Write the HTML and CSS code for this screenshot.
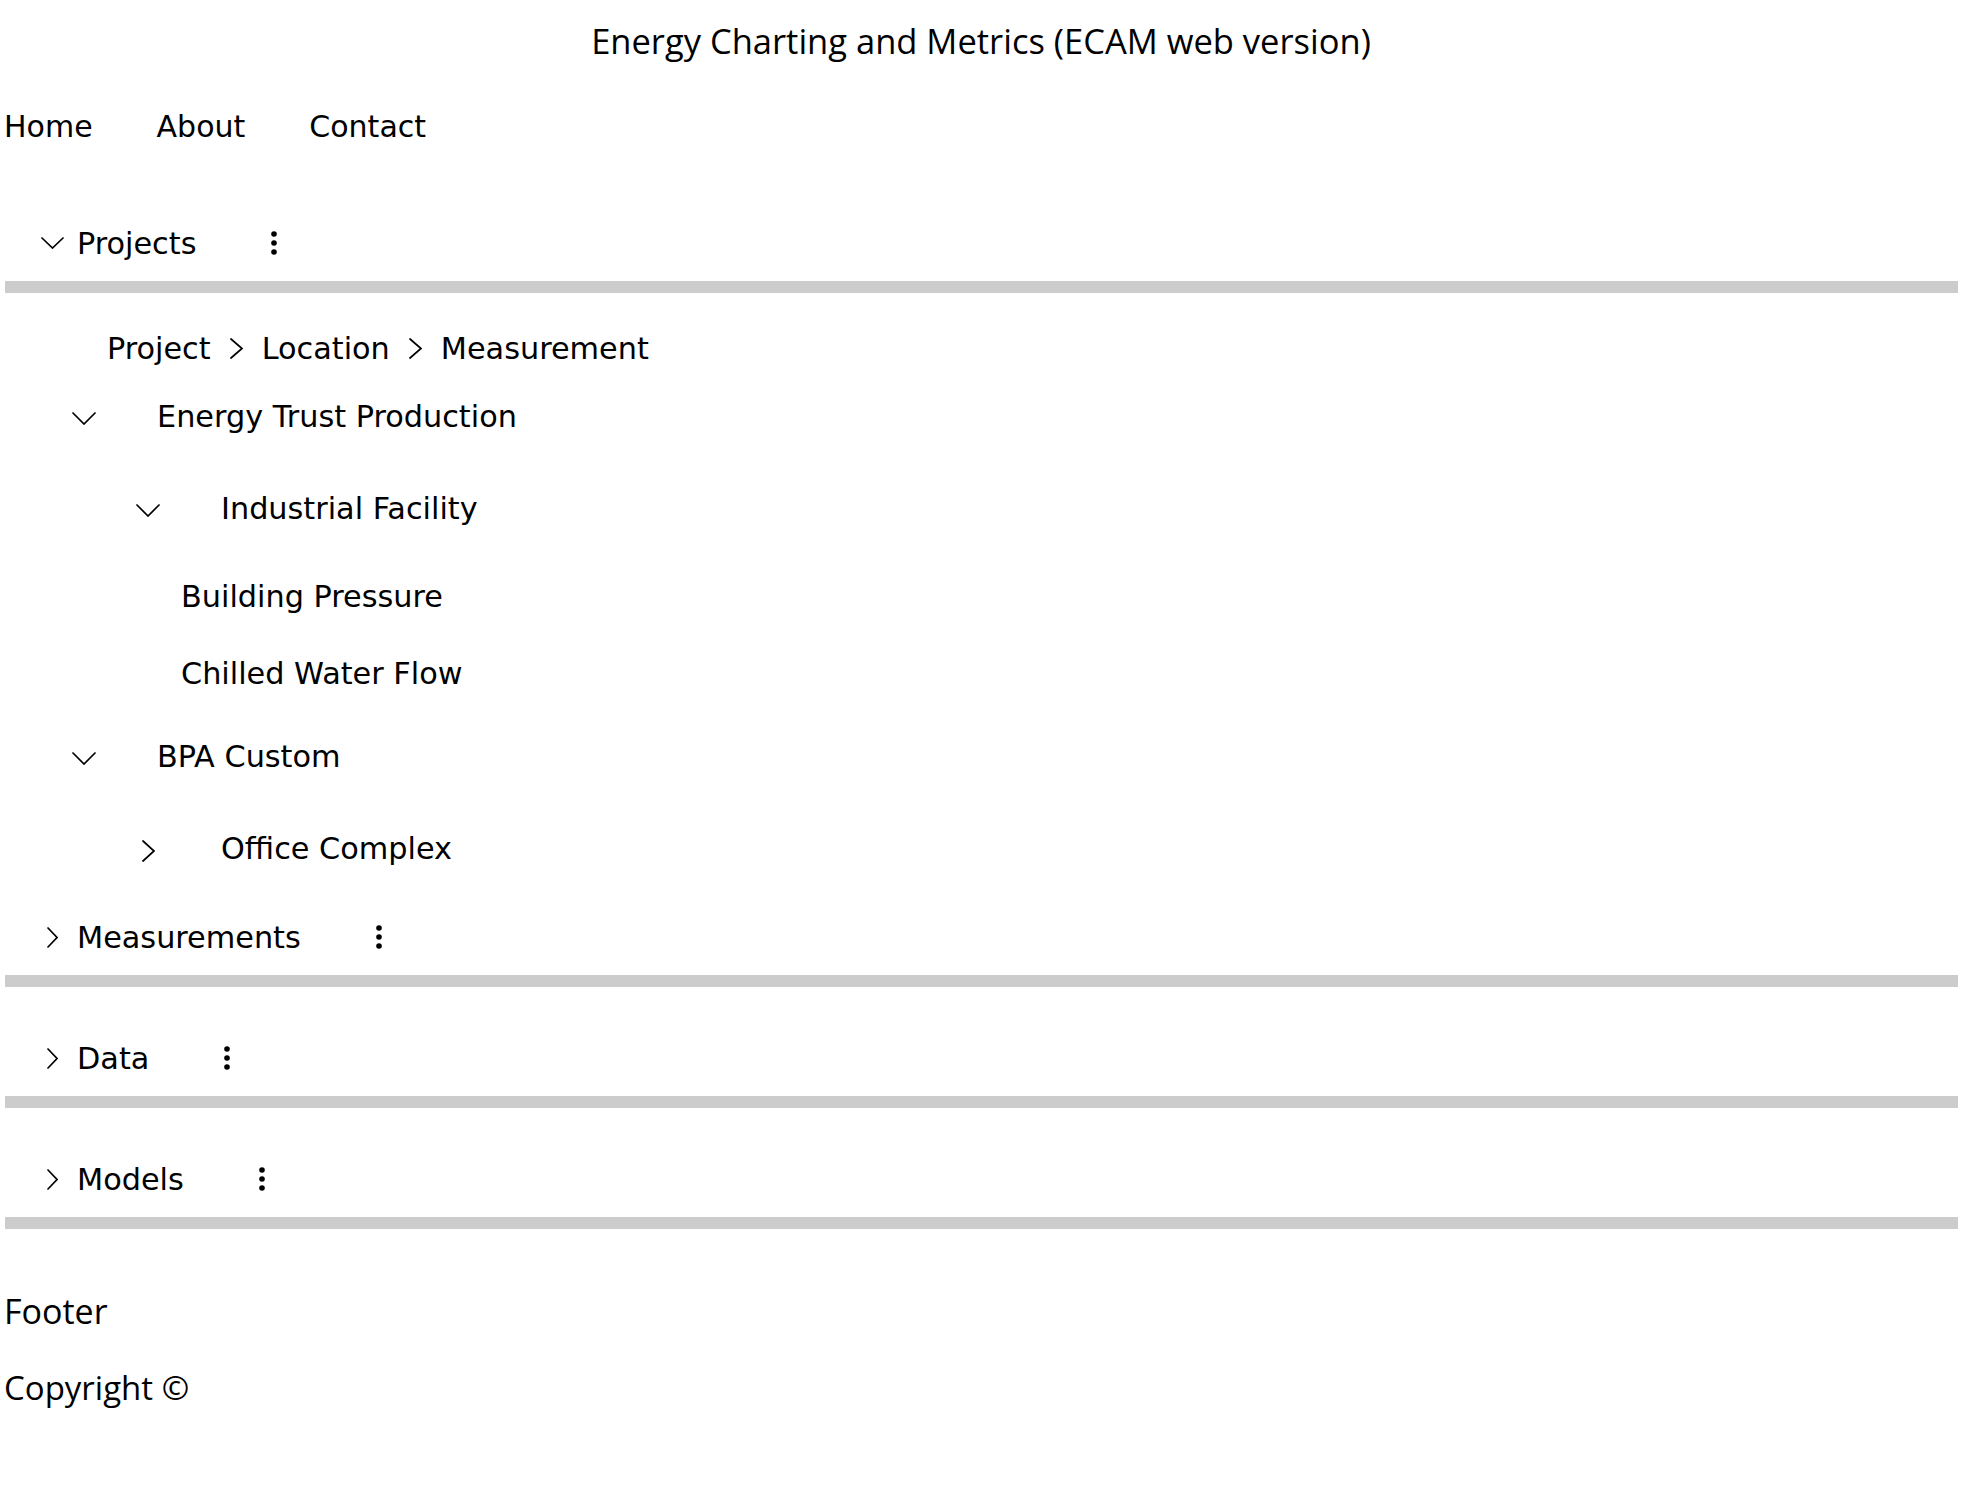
FILE: index.html
```html
<!DOCTYPE html>
<html lang="en">
<head>
<meta charset="utf-8">
<title>ECAM</title>
<link rel="stylesheet" href="styles.css">
</head>
<body>
<div class="page">
  <header class="site-header">
    <h1 class="site-title">Energy Charting and Metrics (ECAM web version)</h1>
  </header>
  <nav class="site-nav">
    <a href="#">Home</a>
    <a href="#">About</a>
    <a href="#">Contact</a>
  </nav>
  <main class="panels">
    <section class="panel">
      <div class="panel-head">
        <span class="chev-box"><svg class="chev-down-sm" viewBox="0 0 23 12" width="23" height="12"><polyline points="1,1 11.5,11 22,1"/></svg></span>
        <span class="panel-title">Projects</span>
        <svg class="kebab" viewBox="0 0 6 24" width="6" height="24"><circle cx="3" cy="3" r="2.8"/><circle cx="3" cy="12" r="2.8"/><circle cx="3" cy="21" r="2.8"/></svg>
      </div>
      <div class="panel-rule"></div>
      <div class="tree">
        <div class="crumbs">
          <span>Project</span>
          <svg class="sep" viewBox="0 0 13 21" width="13" height="21"><polyline points="1,1 12,10.5 1,20"/></svg>
          <span>Location</span>
          <svg class="sep" viewBox="0 0 13 21" width="13" height="21"><polyline points="1,1 12,10.5 1,20"/></svg>
          <span>Measurement</span>
        </div>
        <div class="branch">
          <div class="node level1">
            <span class="node-chev"><svg viewBox="0 0 24 13" width="24" height="13"><polyline points="1,1 12,12 23,1"/></svg></span>
            <span class="label">Energy Trust Production</span>
          </div>
          <div class="branch">
            <div class="node level2">
              <span class="node-chev"><svg viewBox="0 0 24 13" width="24" height="13"><polyline points="1,1 12,12 23,1"/></svg></span>
              <span class="label">Industrial Facility</span>
            </div>
            <div class="leaves">
              <div class="leaf">Building Pressure</div>
              <div class="leaf">Chilled Water Flow</div>
            </div>
          </div>
        </div>
        <div class="branch">
          <div class="node level1">
            <span class="node-chev"><svg viewBox="0 0 24 13" width="24" height="13"><polyline points="1,1 12,12 23,1"/></svg></span>
            <span class="label">BPA Custom</span>
          </div>
          <div class="branch">
            <div class="node level2">
              <span class="node-chev"><svg class="right" viewBox="0 0 13 22" width="13" height="22"><polyline points="1,1 12,11 1,21"/></svg></span>
              <span class="label">Office Complex</span>
            </div>
          </div>
        </div>
      </div>
    </section>
    <section class="panel">
      <div class="panel-head">
        <span class="chev-box"><svg viewBox="0 0 11 21" width="11" height="21"><polyline points="1,1 10,10.5 1,20"/></svg></span>
        <span class="panel-title">Measurements</span>
        <svg class="kebab" viewBox="0 0 6 24" width="6" height="24"><circle cx="3" cy="3" r="2.8"/><circle cx="3" cy="12" r="2.8"/><circle cx="3" cy="21" r="2.8"/></svg>
      </div>
      <div class="panel-rule"></div>
    </section>
    <section class="panel">
      <div class="panel-head">
        <span class="chev-box"><svg viewBox="0 0 11 21" width="11" height="21"><polyline points="1,1 10,10.5 1,20"/></svg></span>
        <span class="panel-title">Data</span>
        <svg class="kebab" viewBox="0 0 6 24" width="6" height="24"><circle cx="3" cy="3" r="2.8"/><circle cx="3" cy="12" r="2.8"/><circle cx="3" cy="21" r="2.8"/></svg>
      </div>
      <div class="panel-rule"></div>
    </section>
    <section class="panel">
      <div class="panel-head">
        <span class="chev-box"><svg viewBox="0 0 11 21" width="11" height="21"><polyline points="1,1 10,10.5 1,20"/></svg></span>
        <span class="panel-title">Models</span>
        <svg class="kebab" viewBox="0 0 6 24" width="6" height="24"><circle cx="3" cy="3" r="2.8"/><circle cx="3" cy="12" r="2.8"/><circle cx="3" cy="21" r="2.8"/></svg>
      </div>
      <div class="panel-rule"></div>
    </section>
  </main>
  <footer class="site-footer">
    <p class="footer-title">Footer</p>
    <p class="copyright">Copyright ©</p>
  </footer>
</div>
</body>
</html>
```

FILE: styles.css
```css
html, body {
  margin: 0;
  background: #ffffff;
}

body {
  font-family: "DejaVu Sans", Verdana, sans-serif;
  font-size: 30px;
  color: #000000;
}

.page {
  padding: 0 18px 0 4px;
}

svg polyline {
  fill: none;
  stroke: #000000;
  stroke-width: 1.7;
  stroke-linecap: round;
  stroke-linejoin: miter;
}

.kebab circle {
  fill: #000000;
}

/* Header */
.site-header {
  padding-top: 18px;
}

.site-title {
  margin: 0;
  font-family: "Open Sans", "Noto Sans", sans-serif;
  font-size: 34.5px;
  font-weight: 400;
  line-height: 46px;
  text-align: center;
}

/* Nav */
.site-nav {
  display: flex;
  gap: 64px;
  margin-top: 45px;
  line-height: 35px;
}

.site-nav a {
  color: #000000;
  text-decoration: none;
}

/* Panels */
.panels {
  margin-top: 28px;
  font-size: 30.3px;
}

.panel {
  padding-top: 33px;
}

.panel-head {
  height: 76px;
  display: flex;
  align-items: center;
  padding-left: 37px;
}

.chev-box {
  width: 23px;
  display: flex;
  justify-content: center;
  align-items: center;
}

.panel-title {
  margin-left: 13px;
  line-height: 35px;
}

.kebab {
  margin-left: 75px;
}

.panel-rule {
  height: 12px;
  background: #cccccc;
  margin-left: 1px;
}

/* Tree */
.tree {
  padding-top: 38px;
}

.crumbs {
  display: flex;
  align-items: center;
  gap: 19px;
  padding-left: 103px;
  line-height: 35px;
}

.tree > .branch {
  margin-top: 48px;
}

.tree > .crumbs + .branch {
  margin-top: 33px;
}

.branch .branch {
  margin-top: 57px;
}

.node {
  display: flex;
  align-items: center;
  line-height: 35px;
}

.level1 {
  padding-left: 68px;
}

.level2 {
  padding-left: 132px;
}

.node-chev {
  width: 24px;
  display: flex;
  justify-content: center;
  align-items: center;
  padding-top: 4px;
}

.node .label {
  margin-left: 61px;
}

.leaves {
  padding-top: 11px;
}

.leaf {
  margin-top: 42px;
  padding-left: 177px;
  line-height: 35px;
}

/* Footer */
.site-footer {
  margin-top: 59px;
  font-family: "Open Sans", "Noto Sans", sans-serif;
}

.site-footer p {
  margin: 0;
}

.footer-title {
  font-size: 34px;
  line-height: 46px;
}

.copyright {
  margin-top: 31px !important;
  font-size: 33px;
  line-height: 45px;
}
```
